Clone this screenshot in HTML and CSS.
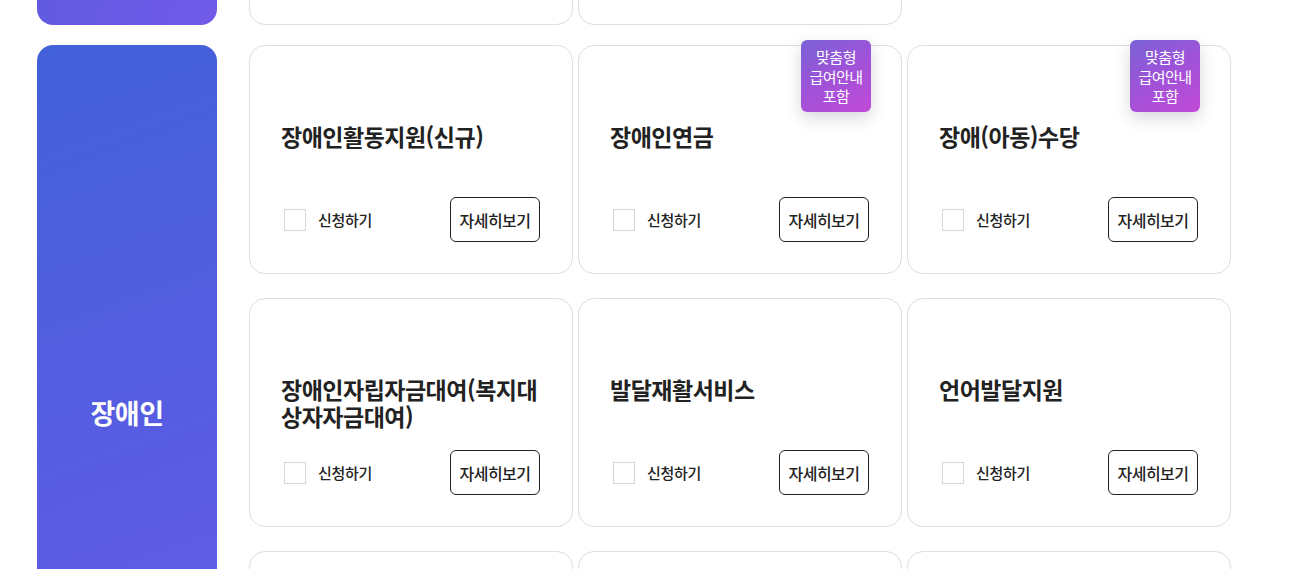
FILE: index.html
```html
<!DOCTYPE html>
<html lang="ko">
<head>
    <meta charset="UTF-8">
    <meta name="viewport" content="width=device-width, initial-scale=1.0">
    <title>복지서비스</title>
    <link rel="stylesheet" href="styles.css">
</head>
<body>

    <div class="service_list">

        <!-- 이전 그룹 (마지막 줄만 보임) -->
        <section class="group prev">
            <div class="group_side"></div>
            <ul class="cards">
                <li class="card"></li>
                <li class="card"></li>
            </ul>
        </section>

        <section class="group">
            <div class="group_side">
                <h2 class="group_name">장애인</h2>
            </div>
            <ul class="cards">
                <li class="card">
                    <h3 class="card_title">장애인활동지원(신규)</h3>
                    <div class="card_bottom">
                        <label class="apply"><input type="checkbox"><span>신청하기</span></label>
                        <a href="#" class="btn_more">자세히보기</a>
                    </div>
                </li>
                <li class="card">
                    <span class="badge">맞춤형<br>급여안내<br>포함</span>
                    <h3 class="card_title">장애인연금</h3>
                    <div class="card_bottom">
                        <label class="apply"><input type="checkbox"><span>신청하기</span></label>
                        <a href="#" class="btn_more">자세히보기</a>
                    </div>
                </li>
                <li class="card">
                    <span class="badge">맞춤형<br>급여안내<br>포함</span>
                    <h3 class="card_title">장애(아동)수당</h3>
                    <div class="card_bottom">
                        <label class="apply"><input type="checkbox"><span>신청하기</span></label>
                        <a href="#" class="btn_more">자세히보기</a>
                    </div>
                </li>
                <li class="card">
                    <h3 class="card_title">장애인자립자금대여(복지대상자자금대여)</h3>
                    <div class="card_bottom">
                        <label class="apply"><input type="checkbox"><span>신청하기</span></label>
                        <a href="#" class="btn_more">자세히보기</a>
                    </div>
                </li>
                <li class="card">
                    <h3 class="card_title">발달재활서비스</h3>
                    <div class="card_bottom">
                        <label class="apply"><input type="checkbox"><span>신청하기</span></label>
                        <a href="#" class="btn_more">자세히보기</a>
                    </div>
                </li>
                <li class="card">
                    <h3 class="card_title">언어발달지원</h3>
                    <div class="card_bottom">
                        <label class="apply"><input type="checkbox"><span>신청하기</span></label>
                        <a href="#" class="btn_more">자세히보기</a>
                    </div>
                </li>
                <li class="card"></li>
                <li class="card"></li>
                <li class="card"></li>
            </ul>
        </section>

    </div>

</body>
</html>
```

FILE: styles.css
```css
* {
    padding: 0;
    margin: 0;
    box-sizing: border-box;
    font-family: 'Noto Sans CJK KR', 'Noto Sans', sans-serif;
    color: #222;
}
ul, ol {
    list-style-type: none;
}
a {
    text-decoration: none;
}
body {
    background: #fff;
    overflow: hidden;
}
.service_list {
    margin-top: -204px;
    padding-left: 37px;
}
.group {
    display: flex;
    gap: 32px;
}
.group + .group {
    margin-top: 20px;
}
.group_side {
    display: flex;
    align-items: center;
    justify-content: center;
    width: 180px;
    flex-shrink: 0;
    border-radius: 16px;
    background: linear-gradient(160deg, #4261d8 0%, #5a5ce3 60%, #6e5be9 100%);
}
.prev .group_side {
    background: linear-gradient(100deg, #5f5ae0 0%, #715be9 100%);
}
.group_name {
    font-size: 27px;
    font-weight: 700;
    color: #fff;
    letter-spacing: -0.5px;
}
.cards {
    display: grid;
    grid-template-columns: repeat(3, 324px);
    column-gap: 5px;
    row-gap: 24px;
}
.card {
    position: relative;
    display: flex;
    flex-direction: column;
    height: 229px;
    padding: 77px 31px 31px 31px;
    border: 1px solid #dedede;
    border-radius: 16px;
    background: #fff;
}
.card_title {
    font-size: 23px;
    font-weight: 700;
    line-height: 27px;
    letter-spacing: -0.5px;
    color: #222;
    word-break: break-all;
}
.card_bottom {
    display: flex;
    align-items: center;
    justify-content: space-between;
    margin-top: auto;
}
.apply {
    display: flex;
    align-items: center;
    gap: 12px;
    padding-left: 3px;
    font-size: 15px;
    cursor: pointer;
}
.apply input {
    appearance: none;
    width: 22px;
    height: 22px;
    border: 1px solid #d3d6da;
    background: #fff;
}
.apply span {
    font-size: 15px;
    font-weight: 500;
    letter-spacing: -0.3px;
}
.btn_more {
    display: flex;
    align-items: center;
    justify-content: center;
    width: 90px;
    height: 45px;
    margin-right: 1px;
    border: 1px solid #222;
    border-radius: 6px;
    font-size: 16px;
    font-weight: 500;
    letter-spacing: -0.5px;
}
.badge {
    position: absolute;
    top: -6px;
    right: 30px;
    width: 70px;
    height: 72px;
    padding-top: 7px;
    border-radius: 6px;
    background: linear-gradient(150deg, #7a62d6 0%, #a052d8 50%, #c24ad8 100%);
    box-shadow: 0 6px 16px rgba(60, 60, 90, 0.2);
    font-size: 15px;
    line-height: 19.5px;
    text-align: center;
    color: #fff;
    letter-spacing: -0.5px;
}
```
